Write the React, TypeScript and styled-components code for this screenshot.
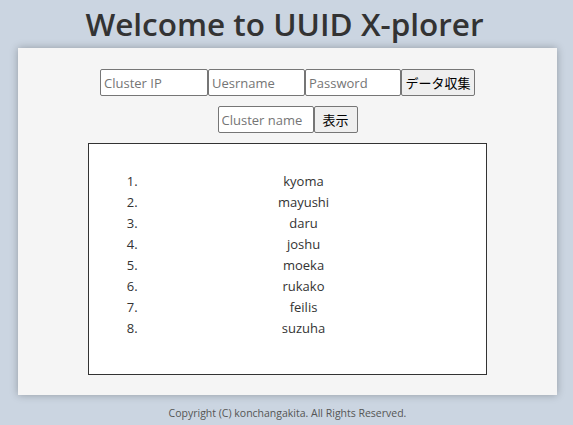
import React from "react";
import styled, { createGlobalStyle } from "styled-components";

const Global = createGlobalStyle`
  html, body { margin: 0; padding: 0; }
  body {
    background: #cbd5e1;
    font-family: "Open Sans", "Noto Sans", "Noto Sans CJK JP", sans-serif;
    color: #333;
  }
`;

const Page = styled.div`
  display: flex;
  flex-direction: column;
  align-items: center;
  padding: 4px 0 0 2px;
`;

const Title = styled.h1`
  margin: 0 0 4px;
  font-size: 31.5px;
  line-height: 40px;
  font-weight: 600;
  color: #333;
  transform: translateX(-3px);
`;

const Card = styled.main`
  width: 539px;
  box-sizing: border-box;
  background: #f5f5f5;
  box-shadow: 0 0 8px rgba(0, 0, 0, 0.28);
  padding: 21px 0 20px;
  display: flex;
  flex-direction: column;
  align-items: center;
  gap: 10px;
`;

const FormRow = styled.div`
  display: flex;
  justify-content: center;
`;

const Field = styled.input<{ $w: number }>`
  width: ${(p) => p.$w}px;
  height: 27px;
  box-sizing: border-box;
  border: 1px solid #767676;
  border-radius: 2px;
  padding: 0 3px;
  font-family: "Open Sans", "Noto Sans", sans-serif;
  font-size: 13px;
  background: #fff;
  color: #333;
  &::placeholder { color: #757575; }
`;

const Button = styled.button<{ $w: number }>`
  width: ${(p) => p.$w}px;
  height: 27px;
  box-sizing: border-box;
  border: 1px solid #767676;
  border-radius: 2px;
  background: #efefef;
  padding: 0;
  font-family: "Noto Sans CJK JP", sans-serif;
  font-size: 13px;
  color: #000;
`;

const ListBox = styled.section`
  width: 399px;
  height: 232px;
  box-sizing: border-box;
  background: #fff;
  border: 1px solid #333;
  padding: 10px 20px;
`;

const NameList = styled.ol`
  margin: 17px 0;
  padding-left: 32px;
  font-size: 13px;
  line-height: 21px;
  color: #333;
`;

const NameItem = styled.li`
  text-align: center;
`;

const Footer = styled.footer`
  margin-top: 11px;
  font-size: 10.5px;
  line-height: 15px;
  color: #555;
`;

const names = ["kyoma", "mayushi", "daru", "joshu", "moeka", "rukako", "feilis", "suzuha"];

export default function App() {
  return (
    <>
      <Global />
      <Page>
        <Title>Welcome to UUID X-plorer</Title>
        <Card>
          <FormRow>
            <Field $w={108} placeholder="Cluster IP" />
            <Field $w={97} placeholder="Uesrname" />
            <Field $w={96} type="password" placeholder="Password" />
            <Button $w={74}>データ収集</Button>
          </FormRow>
          <FormRow>
            <Field $w={96} placeholder="Cluster name" />
            <Button $w={44}>表示</Button>
          </FormRow>
          <ListBox>
            <NameList>
              {names.map((n) => (
                <NameItem key={n}>{n}</NameItem>
              ))}
            </NameList>
          </ListBox>
        </Card>
        <Footer>Copyright (C) konchangakita. All Rights Reserved.</Footer>
      </Page>
    </>
  );
}
